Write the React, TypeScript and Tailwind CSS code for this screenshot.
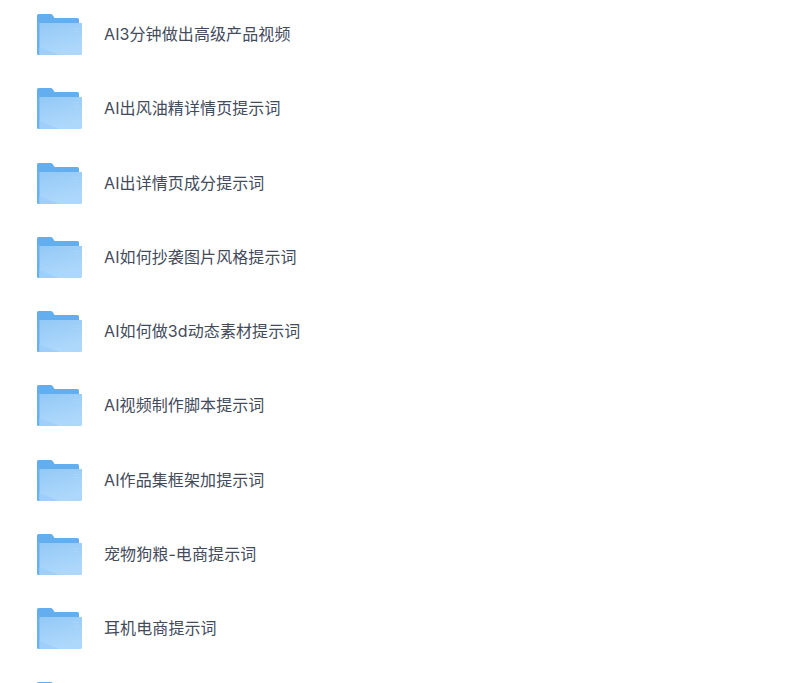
const folders = [
  'AI3分钟做出高级产品视频',
  'AI出风油精详情页提示词',
  'AI出详情页成分提示词',
  'AI如何抄袭图片风格提示词',
  'AI如何做3d动态素材提示词',
  'AI视频制作脚本提示词',
  'AI作品集框架加提示词',
  '宠物狗粮-电商提示词',
  '耳机电商提示词',
  '',
];

function FolderIcon() {
  return (
    <svg width="46" height="42" viewBox="0 0 46 42" className="shrink-0">
      <defs>
        <linearGradient id="front" x1="0" y1="0" x2="0.35" y2="1">
          <stop offset="0" stopColor="#93c9f6" />
          <stop offset="1" stopColor="#aed8fb" />
        </linearGradient>
      </defs>
      {/* back panel with tab */}
      <path d="M0 1.5Q0 0 1.5 0H13.5Q15 0 15.8 1.2L17.6 4H40.5Q42 4 42 5.5V12H0Z" fill="#62aeef" />
      {/* left edge */}
      <path d="M0 8H3V41H1.5Q0 41 0 39.5Z" fill="#69b1ee" />
      {/* front panel */}
      <path d="M2.5 9H45V39.5Q45 41 43.5 41H2.5Z" fill="url(#front)" />
      <path d="M2.5 33L22 41H2.5Z" fill="#9fcff8" />
      <path d="M36 14H42V15H36ZM36 17H42V18H36Z" fill="#a9d4f8" />
    </svg>
  );
}

export default function App() {
  return (
    <div className="h-[683px] overflow-hidden bg-white pl-[37px] pt-[14px] font-['Inter','Noto_Sans_CJK_SC',sans-serif]">
      <ul className="flex flex-col">
        {folders.map((name, i) => (
          <li key={i} className="flex h-[74.25px] shrink-0 items-start gap-[21px]">
            <FolderIcon />
            {name && <span className="mt-[9px] text-[16px] leading-[22px] tracking-[0.1px] text-[#434b5b]">{name}</span>}
          </li>
        ))}
      </ul>
    </div>
  );
}
